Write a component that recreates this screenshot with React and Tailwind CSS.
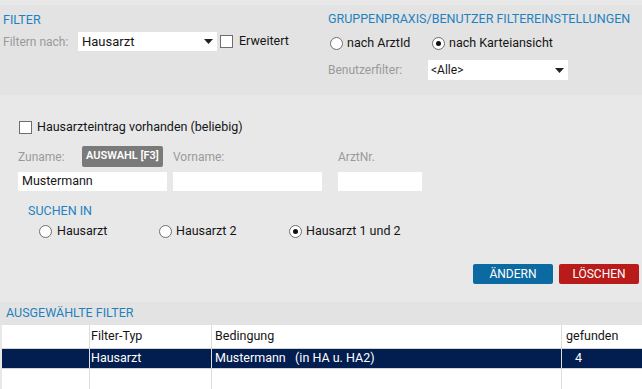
import React from "react";

const Radio = ({ checked }) => (
  <span className="flex h-[13px] w-[13px] items-center justify-center rounded-full border border-[#6e6e6e] bg-white">
    {checked && <span className="h-[5px] w-[5px] rounded-full bg-[#111]" />}
  </span>
);

const Check = () => (
  <span className="block h-[13px] w-[13px] border border-[#6e6e6e] bg-white" />
);

const Caret = () => (
  <svg width="9" height="5" viewBox="0 0 9 5"><path d="M0 0h9L4.5 5z" fill="#222" /></svg>
);

export default function App() {
  return (
    <div className="h-[389px] w-[642px] overflow-hidden bg-[#e8e8e8] text-[12px] text-[#151515]" style={{ fontFamily: "Roboto, 'Liberation Sans', sans-serif" }}>
      {/* Top section */}
      <div className="flex h-[95px] border-t-[5px] border-[#e8e8e8] bg-[#e3e3e3]">
        <div className="w-[325px] pl-[3px] pt-[8px]">
          <div className="h-[13px] text-[12.5px] leading-[13px] text-[#1f82c0]">FILTER</div>
          <div className="mt-[6px] flex h-[19px] items-center">
            <span className="w-[75px] text-[#9a9a9a]">Filtern nach:</span>
            <div className="flex h-[19px] w-[139px] items-center justify-between bg-white pl-[4px] pr-[4px]">
              <span className="text-[13px]">Hausarzt</span>
              <Caret />
            </div>
            <span className="ml-[3px]"><Check /></span>
            <span className="ml-[6px] text-[12.5px]">Erweitert</span>
          </div>
        </div>
        <div className="flex-1 pl-[3px] pt-[7px]">
          <div className="h-[14px] whitespace-nowrap text-[12.5px] leading-[14px] text-[#1f82c0]">GRUPPENPRAXIS/BENUTZER FILTEREINSTELLUNGEN</div>
          <div className="mt-[7px] flex h-[20px] items-center text-[12.5px]">
            <span className="ml-[2px]"><Radio /></span>
            <span className="ml-[4px] w-[85px]">nach ArztId</span>
            <Radio checked />
            <span className="ml-[4px]">nach Karteiansicht</span>
          </div>
          <div className="mt-[7px] flex h-[20px] items-center">
            <span className="w-[100px] text-[#9a9a9a]">Benutzerfilter:</span>
            <div className="flex h-[20px] w-[140px] items-center justify-between bg-white pl-[3px] pr-[4px]">
              <span>&lt;Alle&gt;</span>
              <Caret />
            </div>
          </div>
        </div>
      </div>

      {/* Middle section */}
      <div className="h-[207px] pl-[18px] pt-[25px]">
        <div className="flex h-[14px] items-center">
          <span className="ml-[1px]"><Check /></span>
          <span className="ml-[5px] text-[12.5px]">Hausarzteintrag vorhanden (beliebig)</span>
        </div>
        <div className="mt-[12px] flex h-[21px] items-center">
          <span className="w-[64px] text-[#9a9a9a]">Zuname:</span>
          <span className="flex h-[21px] w-[81px] items-center justify-center rounded-[2px] bg-[#7a7a7a] text-[11px] font-semibold text-white">AUSWAHL [F3]</span>
          <span className="ml-[10px] w-[165px] text-[#9a9a9a]">Vorname:</span>
          <span className="text-[#9a9a9a]">ArztNr.</span>
        </div>
        <div className="mt-[5px] flex h-[19px] items-center">
          <div className="flex h-[19px] w-[149px] items-center bg-white pl-[4px] text-[12.5px]">Mustermann</div>
          <div className="ml-[6px] h-[19px] w-[149px] bg-white" />
          <div className="ml-[16px] h-[19px] w-[84px] bg-white" />
        </div>
        <div className="ml-[10px] mt-[13px] h-[13px] text-[12.5px] leading-[13px] text-[#1f82c0]">SUCHEN IN</div>
        <div className="mt-[7px] flex h-[14px] items-center text-[12.5px]">
          <span className="ml-[21px]"><Radio /></span>
          <span className="ml-[5px] w-[102px]">Hausarzt</span>
          <Radio />
          <span className="ml-[4px] w-[113px]">Hausarzt 2</span>
          <Radio checked />
          <span className="ml-[4px]">Hausarzt 1 und 2</span>
        </div>
        <div className="mt-[26px] flex h-[20px] justify-end gap-[6px] pr-[3px]">
          <span className="flex h-[20px] w-[80px] items-center justify-center rounded-[2px] bg-[#0b6aa1] text-[12px] text-white">ÄNDERN</span>
          <span className="flex h-[20px] w-[80px] items-center justify-center rounded-[2px] bg-[#b91a1a] text-[12px] text-white">LÖSCHEN</span>
        </div>
      </div>

      {/* Selected filters header */}
      <div className="flex h-[23px] items-center bg-[#e3e3e3] pl-[6px] text-[12.5px] text-[#1f82c0]">AUSGEWÄHLTE FILTER</div>

      {/* Table */}
      <div className="ml-[2px] bg-white text-[12.5px]">
        <div className="flex h-[24px] items-center border-b border-[#d4d4d4]">
          <div className="h-full w-[88px] border-r border-[#dcdcdc]" />
          <div className="flex h-full w-[122px] items-center border-r border-[#dcdcdc] pl-[1px]">Filter-Typ</div>
          <div className="flex h-full w-[350px] items-center border-r border-[#dcdcdc] pl-[3px]">Bedingung</div>
          <div className="flex h-full flex-1 items-center pl-[4px]">gefunden</div>
        </div>
        <div className="flex h-[20px] items-center border-b border-[#d4d4d4] bg-[#021d4f] text-white">
          <div className="h-full w-[88px] border-r border-[#e0e0e0]" />
          <div className="flex h-full w-[122px] items-center border-r border-[#e0e0e0] pl-[1px]">Hausarzt</div>
          <div className="flex h-full w-[350px] items-center whitespace-pre border-r border-[#e0e0e0] pl-[3px]">Mustermann   (in HA u. HA2)</div>
          <div className="flex h-full flex-1 items-center pl-[13px]">4</div>
        </div>
        <div className="flex h-[30px]">
          <div className="h-full w-[88px] border-r border-[#dcdcdc]" />
          <div className="h-full w-[122px] border-r border-[#dcdcdc]" />
          <div className="h-full w-[350px] border-r border-[#dcdcdc]" />
          <div className="h-full flex-1" />
        </div>
      </div>
    </div>
  );
}
